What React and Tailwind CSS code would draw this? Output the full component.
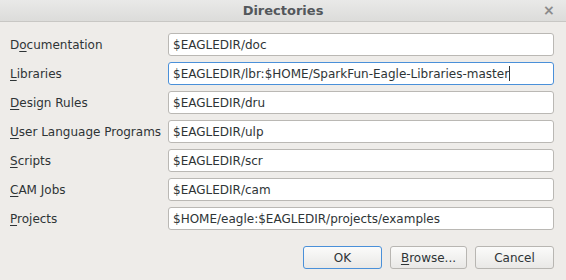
import React from 'react';

// label text split around the mnemonic letter
const rows = [
	{ pre: 'D', key: 'o', post: 'cumentation', value: '$EAGLEDIR/doc' },
	{ pre: '', key: 'L', post: 'ibraries', value: '$EAGLEDIR/lbr:$HOME/SparkFun-Eagle-Libraries-master', focused: true },
	{ pre: '', key: 'D', post: 'esign Rules', value: '$EAGLEDIR/dru' },
	{ pre: '', key: 'U', post: 'ser Language Programs', value: '$EAGLEDIR/ulp' },
	{ pre: '', key: 'S', post: 'cripts', value: '$EAGLEDIR/scr' },
	{ pre: '', key: 'C', post: 'AM Jobs', value: '$EAGLEDIR/cam' },
	{ pre: '', key: 'P', post: 'rojects', value: '$HOME/eagle:$EAGLEDIR/projects/examples' },
];

function Button({ children, primary, className }) {
	return (
		<button
			className={
				'h-[23px] rounded-[3px] border bg-gradient-to-b from-[#fbfbfa] to-[#e9e8e6] text-[12px] text-[#2e3436] ' +
				(primary ? 'border-[#4a90d9] ' : 'border-[#b8b6b2] ') +
				className
			}
		>
			{children}
		</button>
	);
}

export default function App() {
	return (
		<div
			className="w-[566px] h-[280px] bg-[#eeece9] text-[#2e3436] overflow-hidden"
			style={{ fontFamily: '"DejaVu Sans", sans-serif' }}
		>
			<div className="h-[22px] relative flex items-center justify-center bg-gradient-to-b from-[#e9e9e8] to-[#dcdcda] border-b border-[#c8c7c4]">
				<span className="text-[13px] font-bold text-[#53575b]">Directories</span>
				<span className="absolute left-[543px] top-[2px] text-[14px] leading-[16px] text-[#8b8b8b] font-bold">×</span>
			</div>

			<div className="pt-[11px] pl-[10px] pr-[12px] flex flex-col gap-[6px]">
				{rows.map((r) => (
					<div key={r.value} className="flex items-center h-[23px]">
						<div className="w-[158px] text-[12px] leading-none">
							{r.pre}
							<span className="underline underline-offset-2">{r.key}</span>
							{r.post}
						</div>
						<div
							className={
								'flex-1 h-[23px] rounded-[3px] border bg-white flex items-center px-[4px] text-[12px] ' +
								(r.focused ? 'border-[#4a90d9]' : 'border-[#bab8b4]')
							}
						>
							<span>{r.value}</span>
							{r.focused && <span className="w-px h-[15px] bg-[#2e3436]" />}
						</div>
					</div>
				))}
			</div>

			<div className="flex justify-end gap-[8px] pr-[12px] mt-[16px]">
				<Button primary className="w-[79px]">OK</Button>
				<Button className="w-[77px]">
					<span className="underline underline-offset-2">B</span>rowse...
				</Button>
				<Button className="w-[79px]">Cancel</Button>
			</div>
		</div>
	);
}
